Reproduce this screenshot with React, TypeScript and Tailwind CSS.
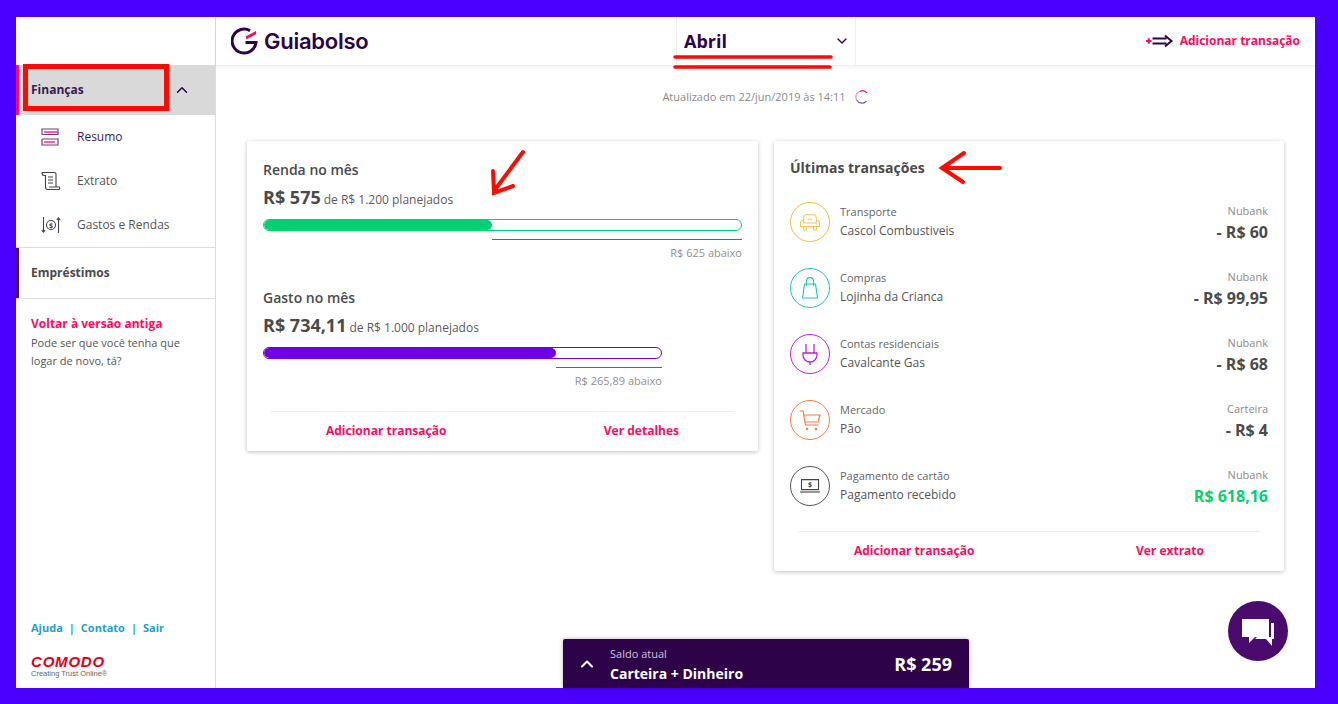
import { ChevronDown, ChevronUp } from "lucide-react";
import type { ReactNode } from "react";

const font = { fontFamily: '"Open Sans", sans-serif' };

function Logo() {
  return (
    <svg width="28" height="28" viewBox="0 0 28 28" fill="none">
      <path d="M19 3.600A12 12 0 1 0 25 15.500H14.500" stroke="#2e0249" strokeWidth="3" />
      <path d="M14.500 9.500 25 4v3.200L15.500 12.300z" fill="#ff0a5a" />
    </svg>
  );
}

function ResumoIcon() {
  return (
    <svg width="18" height="18" viewBox="0 0 18 18" fill="none" strokeWidth="1.200">
      <path d="M1 6.500V1h16v5.500H1" stroke="#6b3f8a" />
      <path d="M3 4h14" stroke="#ff2a6d" strokeWidth="1.500" />
      <path d="M1 11v6h16v-6H1" stroke="#6b3f8a" />
      <path d="M3 14h11" stroke="#ff2a6d" strokeWidth="1.500" />
    </svg>
  );
}

function ExtratoIcon() {
  return (
    <svg width="20" height="20" viewBox="0 0 20 20" fill="none" stroke="#444" strokeWidth="1.100">
      <path d="M1 1.500h12.500c1 0 1.500.8 1.500 1.500v13" />
      <path d="M1 1.500c0 2 .5 3 2 3h1.500V16c0 1.500 1 2.500 2.500 2.500h11c1 0 1-2.500 0-2.500H8" />
      <path d="M7 6h5M7 9h5M7 12h5" />
    </svg>
  );
}

function GastosIcon() {
  return (
    <svg width="20" height="20" viewBox="0 0 20 20" fill="none" stroke="#444" strokeWidth="1.100">
      <path d="M2.500 2v15M.8 15.200l1.700 2 1.700-2" />
      <path d="M17.500 18V3M15.800 4.800l1.700-2 1.700 2" />
      <circle cx="10" cy="10" r="4.500" />
      <text x="10" y="12.500" textAnchor="middle" fontSize="7" fill="#444" stroke="none" fontWeight="700">$</text>
    </svg>
  );
}

function CarIcon() {
  return (
    <svg width="20" height="17" viewBox="0 0 20 17" fill="none" stroke="#f2c94c" strokeWidth="1.100">
      <path d="M3.500 7 4 2.500C4.200 1.200 5 .8 6 .8h8c1 0 1.800.4 2 1.700L16.500 7" />
      <path d="M2.500 6.500c1.200 0 1.500 1 1.500 2.500h12c0-1.500.3-2.500 1.500-2.500s2 .8 2 2v4H.5v-4c0-1.200.8-2 2-2z" />
      <path d="M3.500 12.500v3.500h3v-3.500M13.500 12.500v3.500h3v-3.500" />
      <path d="M8 6c.5-1.600 3.500-1.600 4 0" />
    </svg>
  );
}

function BagIcon() {
  return (
    <svg width="16" height="22" viewBox="0 0 16 22" fill="none" stroke="#1dc6bb" strokeWidth="1.100">
      <path d="M2.500 7h11l2 14H.6z" />
      <path d="M4.500 9V4c0-4.500 7-4.500 7 0v5" />
    </svg>
  );
}

function PlugIcon() {
  return (
    <svg width="16" height="22" viewBox="0 0 16 22" fill="none" stroke="#c01fd8" strokeWidth="1.300">
      <path d="M4 1v9M12 1v9" />
      <path d="M1 10h14v2a7 7 0 0 1-14 0z" />
      <path d="M8 18.500V22" />
    </svg>
  );
}

function CartIcon() {
  return (
    <svg width="22" height="21" viewBox="0 0 22 21" fill="none" stroke="#f47b46" strokeWidth="1.200">
      <path d="M.5 1H4l2.500 14h13" />
      <path d="M4.800 5H21l-2 7H6" />
      <circle cx="8" cy="19" r=".7" />
      <circle cx="17" cy="19" r=".7" />
    </svg>
  );
}

function CardIcon() {
  return (
    <svg width="20" height="14" viewBox="0 0 20 14" fill="none" stroke="#444" strokeWidth="1.100">
      <path d="M1.500.6h17v10h-17z" />
      <path d="M0 13h20" />
      <text x="10" y="8.200" textAnchor="middle" fontSize="7" fill="#444" stroke="none" fontWeight="700">$</text>
    </svg>
  );
}

function SideItem({ icon, label, active }: { icon: ReactNode; label: string; active?: boolean }) {
  return (
    <div className="flex h-[44px] items-center pl-[25px]">
      <div className="flex w-[36px] items-center">{icon}</div>
      <span className={`text-[12px] ${active ? "text-[#3d1a5b]" : "text-[#555]"}`}>{label}</span>
    </div>
  );
}

function Goal({
  title,
  value,
  planned,
  left,
  barW,
  fillW,
  color,
  border,
  lineW,
}: {
  title: string;
  value: string;
  planned: string;
  left: string;
  barW: string;
  fillW: string;
  color: string;
  border: string;
  lineW: string;
}) {
  return (
    <div className="h-[128px]">
      <div className="text-[14px] leading-[20px] font-semibold text-[#4a4a4a]">{title}</div>
      <div className="mt-[4px] flex h-[24px] items-baseline text-[#4a4a4a]">
        <span className="text-[18px] font-bold">{value}</span>
        <span className="ml-[3px] text-[12px] text-[#5a5a5a]">{planned}</span>
      </div>
      <div className={barW}>
        <div className={`mt-[11px] h-[12px] overflow-hidden rounded-full border bg-white ${border}`}>
          <div className={`h-full rounded-full ${fillW} ${color}`} />
        </div>
        <div className={`mt-[8px] ml-auto h-px bg-[#666] ${lineW}`} />
        <div className="mt-[5px] text-right text-[11px] leading-[15px] text-[#8f8f8f]">{left}</div>
      </div>
    </div>
  );
}

const txs = [
  { cat: "Transporte", name: "Cascol Combustiveis", bank: "Nubank", val: "- R$ 60", ring: "border-[#f0c035]", icon: <CarIcon /> },
  { cat: "Compras", name: "Lojinha da Crianca", bank: "Nubank", val: "- R$ 99,95", ring: "border-[#1dc6bb]", icon: <BagIcon /> },
  { cat: "Contas residenciais", name: "Cavalcante Gas", bank: "Nubank", val: "- R$ 68", ring: "border-[#c01fd8]", icon: <PlugIcon /> },
  { cat: "Mercado", name: "Pão", bank: "Carteira", val: "- R$ 4", ring: "border-[#f47b46]", icon: <CartIcon /> },
  { cat: "Pagamento de cartão", name: "Pagamento recebido", bank: "Nubank", val: "R$ 618,16", ring: "border-[#555]", icon: <CardIcon />, green: true },
];

function CardActions({ left, right, leftPad, rightPad }: { left: string; right: string; leftPad: string; rightPad: string }) {
  return (
    <div className="mx-[8px] flex h-[39px] items-center justify-between border-t border-[#eee] text-[12px] font-bold text-[#ff0a5a]">
      <span className={leftPad}>{left}</span>
      <span className={rightPad}>{right}</span>
    </div>
  );
}

export default function App() {
  return (
    <div style={font} className="relative h-[704px] w-[1338px] overflow-hidden bg-[#4b00ff] pt-[17px] pr-[23px] pb-[16px] pl-[16px]">
      <div className="flex h-full bg-white">
        {/* Sidebar */}
        <aside className="flex w-[200px] shrink-0 flex-col border-r border-[#ddd]">
          <div className="h-[48px]" />
          <div className="flex h-[50px] items-center justify-between border-l-[3px] border-[#ff0a5a] bg-[#d9d9d9] pr-[24px] pl-[12px]">
            <span className="text-[12px] font-bold text-[#3a1a55]">Finanças</span>
            <ChevronUp size={18} strokeWidth={2} className="text-[#2e0249]" />
          </div>
          <SideItem icon={<ResumoIcon />} label="Resumo" active />
          <SideItem icon={<ExtratoIcon />} label="Extrato" />
          <SideItem icon={<GastosIcon />} label="Gastos e Rendas" />
          <div className="flex h-[52px] items-center border-y border-[#ddd]">
            <div className="flex h-full w-full items-center border-l-[3px] border-[#4a0a78] pl-[12px] text-[12px] font-bold text-[#4a4a4a]">
              Empréstimos
            </div>
          </div>
          <div className="px-[15px] pt-[16px]">
            <div className="text-[12px] leading-[18px] font-bold text-[#ff0a5a]">Voltar à versão antiga</div>
            <div className="mt-[1px] text-[11px] leading-[18px] text-[#555]">
              Pode ser que você tenha que
              <br />
              logar de novo, tá?
            </div>
          </div>
          <div className="mt-auto px-[15px] pb-[9px]">
            <div className="flex gap-[6px] text-[11px] font-bold text-[#1c9fd0]">
              <span>Ajuda</span>
              <span>|</span>
              <span>Contato</span>
              <span>|</span>
              <span>Sair</span>
            </div>
            <div className="mt-[18px] text-[15px] leading-[15px] font-black tracking-[0.800px] text-[#e3000f] italic" style={{ fontFamily: '"Liberation Sans", sans-serif' }}>
              COMODO
            </div>
            <div className="text-[7.500px] leading-[10px] text-[#666]" style={{ fontFamily: '"Liberation Sans", sans-serif' }}>
              Creating Trust Online®
            </div>
          </div>
        </aside>

        <div className="flex min-w-0 flex-1 flex-col">
          {/* Header */}
          <header className="relative flex h-[49px] shrink-0 items-center border-b border-[#f0f0f0] shadow-[0_1px_4px_rgba(0,0,0,0.05)]">
            <div className="flex w-[460px] items-center gap-[5px] pl-[15px]">
              <Logo />
              <span className="text-[22px] font-semibold tracking-[-0.250px] text-[#2e0249]" style={{ fontFamily: "Inter, sans-serif" }}>
                Guiabolso
              </span>
            </div>
            <div className="flex h-full w-[180px] items-center justify-between border-x border-[#eee] pr-[5px] pl-[7px]">
              <span className="text-[18px] font-bold text-[#2e0249]">Abril</span>
              <ChevronDown size={16} className="text-[#2e0249]" />
            </div>
            <div className="ml-auto flex items-center gap-[7px] pr-[15px]">
              <svg width="27" height="14" viewBox="0 0 27 14" fill="none" strokeWidth="2">
                <path d="M0 7h5.500M2.750 4.250v5.500" stroke="#ff0a5a" />
                <path d="M6.500 4.500h14M6.500 9.500h14M19 1.500l6.500 5.500-6.500 5.500" stroke="#2e0249" />
              </svg>
              <span className="text-[12px] font-bold text-[#ff0a5a]">Adicionar transação</span>
            </div>
          </header>

          {/* Main */}
          <main className="flex-1 px-[31px]">
            <div className="mt-[22px] flex h-[18px] items-center justify-center gap-[9px] text-[11px] text-[#8a8a8a]">
              <span>Atualizado em 22/jun/2019 às 14:11</span>
              <svg width="14" height="14" viewBox="0 0 14 14" fill="none" strokeWidth="1.200">
                <path d="M5 1.300A6 6 0 0 0 1.700 10" stroke="#e58ab0" />
                <path d="M1.700 10A6 6 0 0 0 11.500 11" stroke="#7a5a96" />
                <path d="M5 1.300A6 6 0 0 1 12 3" stroke="#ff0a5a" />
              </svg>
            </div>

            <div className="mt-[35px] flex items-start gap-[16px]">
              {/* Left card */}
              <section className="h-[310px] w-[511px] rounded-[2px] bg-white px-[16px] pt-[19px] shadow-[0_1px_4px_rgba(0,0,0,0.25)]">
                <Goal title="Renda no mês" value="R$ 575" planned="de R$ 1.200 planejados" left="R$ 625 abaixo" barW="w-[479px]" fillW="w-[228px]" color="bg-[#00d172]" border="border-[#00d172]" lineW="w-[250px]" />
                <Goal title="Gasto no mês" value="R$ 734,11" planned="de R$ 1.000 planejados" left="R$ 265,89 abaixo" barW="w-[399px]" fillW="w-[292px]" color="bg-[#6f00e0]" border="border-[#6f00e0]" lineW="w-[106px]" />
                <div className="mt-[-5px]">
                  <CardActions left="Adicionar transação" right="Ver detalhes" leftPad="ml-[55px]" rightPad="mr-[55px]" />
                </div>
              </section>

              {/* Right card */}
              <section className="h-[430px] w-[510px] rounded-[2px] bg-white px-[16px] pt-[17px] shadow-[0_1px_4px_rgba(0,0,0,0.25)]">
                <div className="text-[14px] leading-[20px] font-bold text-[#4a4a4a]">Últimas transações</div>
                <div className="mt-[26px] flex flex-col">
                  {txs.map((t) => (
                    <div key={t.name} className="flex h-[66px] items-start">
                      <div className={`-mt-[2px] flex h-[40px] w-[40px] shrink-0 items-center justify-center rounded-full border ${t.ring}`}>{t.icon}</div>
                      <div className="ml-[10px] flex-1">
                        <div className="text-[11px] leading-[16px] text-[#666]">{t.cat}</div>
                        <div className="mt-[2px] text-[12px] leading-[18px] text-[#555]">{t.name}</div>
                      </div>
                      <div className="-mt-[1px] text-right">
                        <div className="text-[11px] leading-[16px] text-[#8a8a8a]">{t.bank}</div>
                        <div className={`mt-[3px] text-[16px] leading-[20px] font-bold ${t.green ? "text-[#00d172]" : "text-[#4a4a4a]"}`}>{t.val}</div>
                      </div>
                    </div>
                  ))}
                </div>
                <div className="mt-[-3px]">
                  <CardActions left="Adicionar transação" right="Ver extrato" leftPad="ml-[56px]" rightPad="mr-[56px]" />
                </div>
              </section>
            </div>
          </main>
        </div>
      </div>

      {/* Saldo bar */}
      <div className="absolute top-[639px] left-[563px] flex h-[49px] w-[406px] items-center rounded-t-[2px] bg-[#2e0249] pr-[17px] pl-[14px] text-white shadow-[0_0_4px_rgba(0,0,0,0.3)]">
        <ChevronUp size={20} strokeWidth={2.500} />
        <div className="ml-[13px] flex-1 pt-[2px]">
          <div className="text-[11px] leading-[14px] text-[#cfc3d8]">Saldo atual</div>
          <div className="mt-[4px] text-[14px] leading-[18px] font-bold">Carteira + Dinheiro</div>
        </div>
        <span className="mt-[1px] text-[18px] font-bold">R$ 259</span>
      </div>

      {/* Chat */}
      <div className="absolute top-[601px] left-[1228px] flex h-[60px] w-[60px] items-center justify-center rounded-full bg-[#4a0a6e]">
        <svg width="32" height="30" viewBox="0 0 32 30">
          <path d="M0 3h27v18H13l-6 6v-6H0z" fill="#fff" />
          <path d="M29 7h3v16h-2v7l-6-7H13l2-2h14z" fill="#fff" />
        </svg>
      </div>

      {/* Red annotations */}
      <div className="absolute top-[64px] left-[23px] h-[47px] w-[146px] border-[5px] border-[#ff0a00]" />
      <svg className="pointer-events-none absolute top-0 left-0" width="1338" height="704" fill="none" stroke="#ff0a00" strokeWidth="3.500" strokeLinecap="round">
        <path d="M675 57h156M675 67h155" />
        <path d="M523 152 494 191M493 171 494 193 513 186" strokeWidth="4" />
        <path d="M1000 168H943M964 153 942 168 963 182" strokeWidth="4" />
      </svg>
    </div>
  );
}
